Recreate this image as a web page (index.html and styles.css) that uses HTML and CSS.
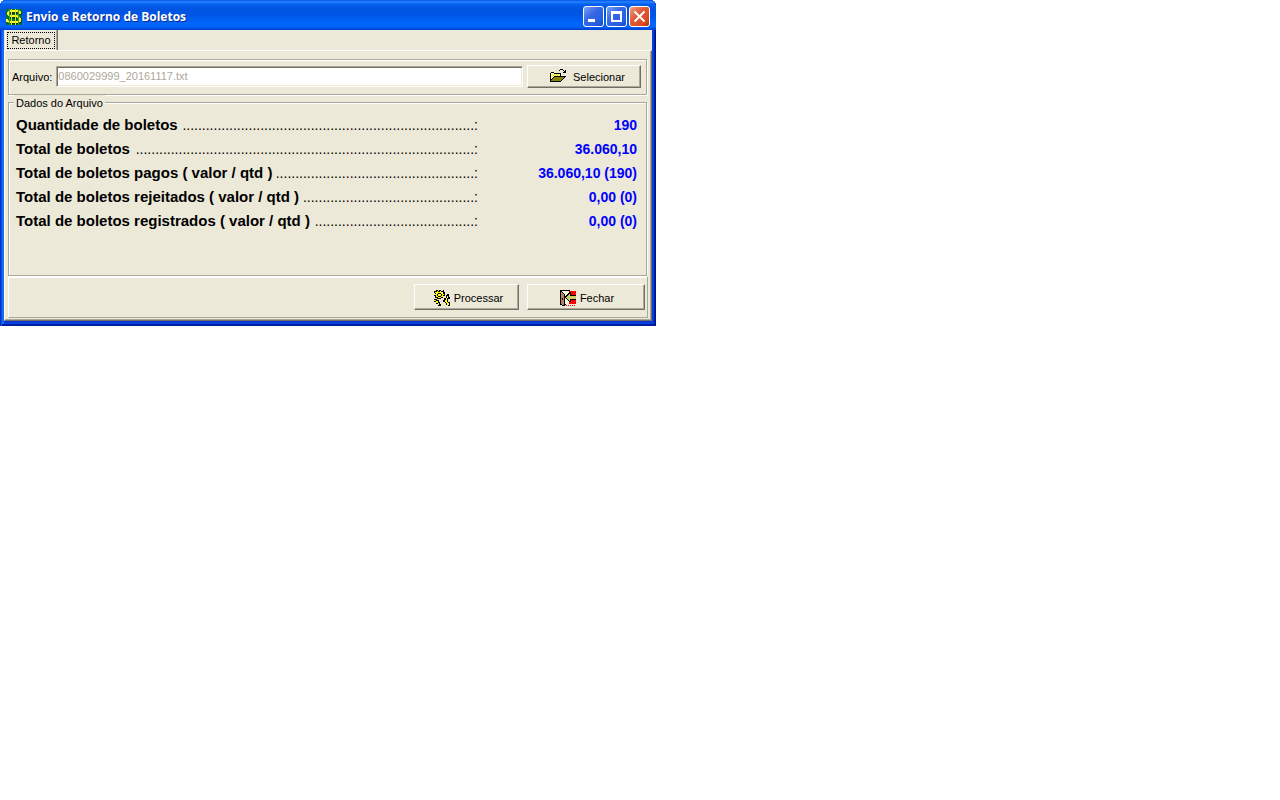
FILE: index.html
```html
<!DOCTYPE html>
<html lang="pt-BR">
<head>
<meta charset="utf-8">
<title>Envio e Retorno de Boletos</title>
<link rel="stylesheet" href="styles.css">
</head>
<body>
<main class="window">
  <header class="titlebar">
    <svg class="icon" viewBox="0 0 16 16" aria-hidden="true">
      <path fill="#087030" d="M0 0h16v16H0z"/>
      <path fill="none" stroke="#053c18" stroke-width="3" d="M14 6V4L12 3H4L3 4v2l2 2h6l3 2v3l-2 1H4l-2-1v-2"/>
      <path fill="none" stroke="#ffff30" stroke-width="2" d="M14 5V3l-2-1H4L2 4v1l2 2h7l3 3v2l-2 1H4l-3-1v-2"/>
      <path fill="#d8e818" d="M5 0h1v16H5zM9 0h1v16H9z"/>
      <path fill="#40a030" d="M3 0h1v16H3zM12 0h1v16h-1z"/>
    </svg>
    <h1 class="title">Envio e Retorno de Boletos</h1>
    <div class="controls">
      <button class="control" type="button" aria-label="Minimizar"><svg viewBox="0 0 19 19"><path fill="#fff" d="M4 12h7v3H4z"/></svg></button>
      <button class="control" type="button" aria-label="Maximizar"><svg viewBox="0 0 19 19"><path fill="#fff" fill-rule="evenodd" d="M4 4h11v11H4zM6 7v6h7V7z"/></svg></button>
      <button class="control control-close" type="button" aria-label="Fechar janela"><svg viewBox="0 0 19 19"><path fill="none" stroke="#fff" stroke-width="2" d="M4.500 4.500l10 10M14.500 4.500l-10 10"/></svg></button>
    </div>
  </header>
  <div class="content">
    <div class="tabs" role="tablist"><button class="tab" type="button" role="tab" aria-selected="true"><span class="tab-label">Retorno</span></button></div>
    <div class="page" role="tabpanel">
      <div class="file-panel">
        <label for="arquivo">Arquivo:</label>
        <input class="file-input" id="arquivo" type="text" value="0860029999_20161117.txt" disabled>
        <button class="button select-button" type="button">
          <svg class="icon" viewBox="0 0 16 16" aria-hidden="true" shape-rendering="crispEdges">
            <path d="M0 4h1V3h3v1h7v3h5v1h-1v1h-1v1h-1v1h-1v1h-1v1H0zM9 1h1V0h3v1h1v1h1V1h1v3h-3V3h1V2h-1V1h-3v1H9z"/>
            <path fill="#ffff9c" d="M1 4h3v1h6v2H4v1H3v1H2v1H1z"/>
            <path fill="#e8d840" d="M2 5h1v1H2zM4 5h1v1H4zM6 5h1v1H6zM8 5h1v1H8zM1 6h1v1H1zM3 6h1v1H3zM5 6h1v1H5zM7 6h1v1H7zM2 7h1v1H2z"/>
            <path fill="#848200" d="M4 8h10v1h-1v1h-1v1h-1v1H1v-1h1v-1h1V9h1z"/>
          </svg>
          Selecionar
        </button>
      </div>
      <fieldset class="data">
        <legend>Dados do Arquivo</legend>
        <dl class="totals">
          <div class="row"><dt>Quantidade de boletos&nbsp;<span class="leader">...........................................................................:</span></dt><dd>190</dd></div>
          <div class="row"><dt>Total de boletos&nbsp;<span class="leader">.......................................................................................:</span></dt><dd>36.060,10</dd></div>
          <div class="row"><dt>Total de boletos pagos ( valor / qtd )<span class="leader">...................................................:</span></dt><dd>36.060,10 (190)</dd></div>
          <div class="row"><dt>Total de boletos rejeitados ( valor / qtd )<span class="leader">............................................:</span></dt><dd>0,00 (0)</dd></div>
          <div class="row"><dt>Total de boletos registrados ( valor / qtd )&nbsp;<span class="leader">.........................................:</span></dt><dd>0,00 (0)</dd></div>
        </dl>
      </fieldset>
      <footer class="actions">
        <button class="button process-button" type="button">
          <svg class="icon" viewBox="0 0 16 16" aria-hidden="true" shape-rendering="crispEdges">
            <path d="M0 1h2V0h2v1h1V0h2v1h2V0h1v2h1v4H9v2H7v1H3V8H1V6H0V5h1V3H0zM0 9h3v1h2v2h1v2h1v2H4v-2H2v-2H0zM12 5h1V4h2v3h1v2h-2v3h2v4h-2v-1h-2v-2h-1v-1H9v-2h1V8h2z"/>
            <path fill="#ff0" d="M1 2h2V1h1v1h2V1h1v1h2v2h1v1H9v2H7v1H4V7H2V5H1V4h1V3H1zM0 10h2v1h2v2h1v2H4v-2H2v-2H0zM13 6h1v2h-1v4h1v1h1v2h-2v-2h-1v-1h-1v-2h1V8h1z"/>
            <path d="M4 3h3v1h1v2H7v1H4V6H3V4h1z"/><path fill="#ff0" d="M4 4h3v2H4z"/><path fill="#fff" d="M5 4h1v1H5zM8 2h1v1H8zM13 7h1v1h-1z"/>
          </svg>
          Processar
        </button>
        <button class="button close-button" type="button">
          <svg class="icon" viewBox="0 0 16 16" aria-hidden="true" shape-rendering="crispEdges">
            <path d="M0 0h10v14H6v1H5v1H2v-1H0z"/>
            <path fill="#f00" d="M9 1h7v13H9zM6 15h1v1H6zM8 15h1v1H8zM10 15h1v1h-1zM12 15h1v1h-1zM14 15h1v1h-1z"/>
            <path fill="#fff" d="M2 1h7v13H5V4H4V3H3V2H2z"/>
            <path fill="#ffff9c" d="M6 2h1v2H6zM8 1h1v2H8zM5 8h1v2H5zM6 10h1v2H6zM7 12h1v2H7z"/>
            <path fill="#b58263" d="M1 2h1v1h1v1h1v11H2v-1H1z"/>
            <path d="M2 8h1v2H2z"/>
            <path d="M5 6h1V5h1V4h1V3h1V2h2v3h5v5h-5v2H9v-1H8v-1H7V9H6V8H5z"/>
            <path fill="#cece63" d="M6 7h1V6h1V5h1V4h1v2h6v3h-6v2H9v-1H8V9H7V8H6z"/>
          </svg>
          Fechar
        </button>
      </footer>
    </div>
  </div>
</main>
</body>
</html>
```
FILE: styles.css
```css
* { box-sizing: border-box; }

body {
  margin: 0;
  background: #fff;
  color: #000;
  font: 11px/14px "Liberation Sans", Arial, sans-serif;
}

button, input { font: inherit; color: inherit; }

.window {
  max-width: 656px;
  padding: 0 4px 5px;
  background: #0831d9;
  border-radius: 6px 6px 0 0;
  box-shadow: inset 1px 0 #0030dc, inset -1px 0 #00138c, inset 2px 0 #0855dd, inset -2px -2px #001ea0, inset 4px 0 #166aee, inset -4px -4px #0441d8;
}

.titlebar {
  display: flex;
  align-items: center;
  gap: 4px;
  height: 30px;
  margin: 0 -4px;
  padding: 3px 6px 0;
  border-radius: 6px 6px 0 0;
  background: linear-gradient(#0058e6 0, #2a83ff 2px, #0362ee 4px, #0054e0 9px, #0055e6 15px, #0067ff 24px, #0061f5 27px, #003dd0 30px);
}

.icon { flex: none; width: 16px; height: 16px; }

.title {
  flex: 1;
  margin: 0;
  color: #fff;
  font: bold 12px/16px "Open Sans", "Noto Sans", sans-serif;
  text-shadow: 1px 1px #0a2a8c;
}

.controls { display: flex; gap: 2px; }

.control {
  width: 21px;
  height: 21px;
  padding: 0;
  border: 1px solid #fff;
  border-radius: 3px;
  background: linear-gradient(135deg, #7ba2f5, #3868e4 40%, #245ee0 80%, #1746b8);
}

.control svg { display: block; width: 19px; height: 19px; }

.control-close { background: linear-gradient(135deg, #f0a084, #e35a38 40%, #dc4820 80%, #a82c10); }

.content { background: #ece9d8; }

.tabs { display: flex; height: 20px; padding-left: 1px; }

.tab {
  display: flex;
  width: 53px;
  padding: 2px 2px 1px 1px;
  border: 0;
  border-left: 1px solid #fff;
  border-right: 1px solid #716f64;
  box-shadow: inset -1px 0 #aca899;
  background: #ece9d8;
}

.tab-label {
  flex: 1;
  border: 1px dotted #000;
  line-height: 14px;
}

.page {
  padding: 8px 3px 2px;
  border: 1px solid #fff;
  border-right-color: #716f64;
  border-bottom-color: #716f64;
  box-shadow: inset -1px -1px #aca899;
}

.file-panel, .data {
  margin: 0 1px 0 0;
  border: 1px solid #aca899;
  box-shadow: inset 1px 1px #fff, 1px 1px #fff;
}

.file-panel {
  display: flex;
  align-items: center;
  gap: 4px;
  height: 36px;
  padding: 0 5px 1px 3px;
}

.file-input {
  flex: 1;
  min-width: 0;
  height: 21px;
  padding: 0 1px 2px;
  border: 1px solid;
  border-color: #aca899 #fff #fff #aca899;
  box-shadow: inset 1px 1px #716f64, inset -1px -1px #ece9d8;
  background: #fff;
  color: #aca899;
}

.button {
  display: flex;
  align-items: center;
  justify-content: center;
  gap: 4px;
  padding: 0;
  border: 1px solid;
  border-color: #fff #716f64 #716f64 #fff;
  box-shadow: inset -1px -1px #aca899;
  background: #ece9d8;
}

.select-button { width: 114px; height: 23px; gap: 7px; padding-left: 7px; }

.data {
  min-width: 0;
  height: 181px;
  padding: 3px 9px 0 7px;
}

.data legend {
  margin-left: -2px;
  padding: 1px 2px 0;
  background: #ece9d8;
}

.totals { margin: 0; }

.row { display: flex; line-height: 24px; font-weight: bold; }

.row dt {
  display: flex;
  flex: 1;
  min-width: 0;
  font-size: 15px;
  white-space: nowrap;
}

.leader {
  display: flex;
  flex: 1;
  justify-content: flex-end;
  min-width: 0;
  overflow: hidden;
  font-size: 14px;
  font-weight: normal;
}

.row dd {
  width: 159px;
  margin: 0;
  color: #00f;
  font-size: 14px;
  text-align: right;
}

.actions {
  display: flex;
  justify-content: flex-end;
  gap: 8px;
  height: 42px;
  padding: 7px 2px 0;
  border: 1px solid;
  border-color: #fff #aca899 #aca899 #fff;
  box-shadow: inset 0 1px #fff;
}

.actions .button { height: 26px; padding: 2px 0 0 2px; }
.actions .process-button { width: 105px; padding-left: 4px; }
.actions .close-button { width: 118px; }
```
